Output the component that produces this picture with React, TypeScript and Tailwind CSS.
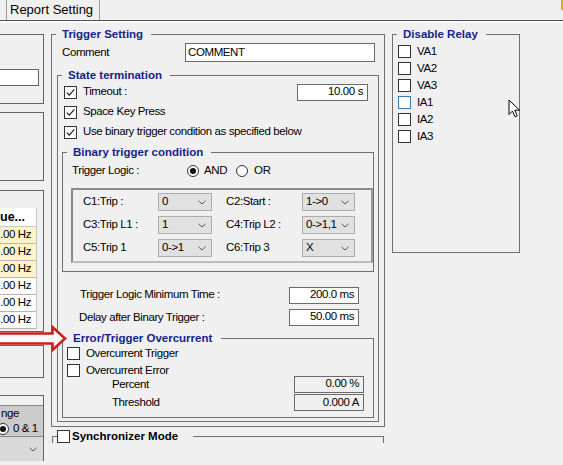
import { ReactNode } from 'react'

const titleCls = "font-bold text-[#14238a] tracking-normal leading-[14px]"

function Check({ checked = false, hover = false }: { checked?: boolean; hover?: boolean }) {
  return (
    <span
      className={`flex h-[13px] w-[13px] shrink-0 items-center justify-center border bg-white ${
        hover ? 'border-[#3d7bb5]' : 'border-[#333333]'
      }`}
    >
      {checked && (
        <svg viewBox="0 0 11 11" className="h-[11px] w-[11px]">
          <path d="M1.8 5.6 L4.3 8.1 L9.4 2.4" fill="none" stroke="#111" strokeWidth="1.1" />
        </svg>
      )}
    </span>
  )
}

function Radio({ checked = false }: { checked?: boolean }) {
  return (
    <span className="flex h-[12px] w-[12px] shrink-0 items-center justify-center rounded-full border border-[#333333] bg-white">
      {checked && <span className="h-[6px] w-[6px] rounded-full bg-[#111]" />}
    </span>
  )
}

function Chevron() {
  return (
    <svg viewBox="0 0 8 5" className="h-[5px] w-[8px]">
      <path d="M0.5 0.8 L4 4 L7.5 0.8" fill="none" stroke="#555" strokeWidth="1" />
    </svg>
  )
}

function Combo({ value }: { value: string }) {
  return (
    <div className="flex h-[18px] items-center justify-between border border-[#adadad] bg-[#e1e1e1] pl-[3px] pr-[5px]">
      <span>{value}</span>
      <Chevron />
    </div>
  )
}

function ValueBox({ value, disabled = false, width }: { value: string; disabled?: boolean; width: string }) {
  return (
    <div
      className={`flex h-[17px] items-center justify-end border border-[#6a6a6a] pr-[4px] ${width} ${
        disabled ? 'bg-[#f0f0f0]' : 'bg-white'
      }`}
    >
      {value}
    </div>
  )
}

function Group({ title, className = '', legendCls = '', children }: { title: ReactNode; className?: string; legendCls?: string; children?: ReactNode }) {
  return (
    <fieldset className={`border border-[#707070] ${className}`}>
      <legend className={`ml-[4px] pl-[6px] pr-[8px] ${titleCls} ${legendCls}`}>{title}</legend>
      {children}
    </fieldset>
  )
}

function Sidebar() {
  const rows = [true, true, true, false, false, false]
  return (
    <div className="flex w-[44px] shrink-0 flex-col">
      <div className="mt-[11px] h-[70px] border-y border-r border-[#646464]">
        <div className="mt-[34px] h-[17px] w-[39px] border-y border-r border-[#646464] bg-white" />
      </div>
      <div className="mt-[8px] h-[69px] border-y border-r border-[#646464]" />
      <div className="mt-[9px] h-[142px] border-y border-r border-[#646464]">
        <div className="mt-[17px] w-[37px] border-r border-[#c8c8c8]">
          <div className="flex h-[19px] items-center border-b border-[#c8c8c8] bg-white text-[12.5px] font-bold tracking-normal">
            ue...
          </div>
          {rows.map((y, i) => (
            <div
              key={i}
              className={`flex h-[17px] items-center justify-end border-b border-[#b4b4b4] pr-[5px] ${
                y ? 'bg-[#fff3c9]' : 'bg-white'
              }`}
            >
              .00 Hz
            </div>
          ))}
        </div>
      </div>
      <div className="mt-[13px] h-[33px] border-y border-r border-[#646464]" />
      <div className="mt-[17px] flex-1 border-t border-r border-[#646464]">
        <div className="h-[9px]" />
        <div className="flex h-[32px] flex-col justify-center border-y border-[#8a8a8a] bg-[#cbcbcb]">
          <div className="flex h-[15px] items-center pl-px">nge</div>
          <div className="-ml-[3px] flex h-[15px] items-center gap-[4px]">
            <Radio checked />
            <span className="whitespace-nowrap">0 &amp; 1</span>
          </div>
        </div>
        <div className="flex h-[24px] items-center justify-end bg-[#d9d9d9] pr-[6px]">
          <Chevron />
        </div>
      </div>
    </div>
  )
}

function TriggerSetting() {
  const conds = [
    ['C1:Trip :', '0', 'C2:Start :', '1->0'],
    ['C3:Trip L1 :', '1', 'C4:Trip L2 :', '0->1,1'],
    ['C5:Trip 1', '0->1', 'C6:Trip 3', 'X'],
  ]
  return (
    <div className="ml-[7px] flex w-[334px] shrink-0 flex-col">
      <Group title="Trigger Setting" className="mt-[4px] pb-[4px]">
        <div className="mt-[2px] flex h-[19px] items-center">
          <span className="ml-[10px] w-[123px]">Comment</span>
          <div className="flex h-[19px] w-[190px] items-center border border-[#6a6a6a] bg-white pl-[2px]">COMMENT</div>
        </div>

        <Group title="State termination" className="mx-[5px] mt-[6px] pb-[3px]">
          <div className="flex h-[20px] items-center gap-[6px] pl-[6px]">
            <Check checked />
            <span>Timeout :</span>
            <div className="ml-auto mr-[10px]">
              <ValueBox value="10.00 s" width="w-[71px]" />
            </div>
          </div>
          <div className="flex h-[20px] items-center gap-[6px] pl-[6px]">
            <Check checked />
            <span>Space Key Press</span>
          </div>
          <div className="flex h-[20px] items-center gap-[6px] pl-[6px]">
            <Check checked />
            <span>Use binary trigger condition as specified below</span>
          </div>

          <Group title="Binary trigger condition" className="mx-[4px] mt-[3px] pb-[8px]" legendCls="pl-[5px] pr-[7px]">
            <div className="flex h-[24px] items-center pl-[9px]">
              <span className="w-[115px]">Trigger Logic :</span>
              <Radio checked />
              <span className="ml-[5px]">AND</span>
              <span className="ml-[9px]">
                <Radio />
              </span>
              <span className="ml-[6px]">OR</span>
            </div>
            <div className="ml-[8px] mt-[5px] h-[75px] border-2 border-t-[#8a8a8a] border-l-[#8a8a8a] border-r-[#9a9a9a] border-b-[#bdbdbd] pt-[3px]">
              <div className="grid grid-cols-[75px_54px_90px_53px] gap-y-[5px] pl-[10px]">
                {conds.map(([l1, v1, l2, v2]) => (
                  <div key={l1} className="contents">
                    <span className="flex h-[18px] items-center">{l1}</span>
                    <Combo value={v1} />
                    <span className="flex h-[18px] items-center pl-[14px]">{l2}</span>
                    <Combo value={v2} />
                  </div>
                ))}
              </div>
            </div>
          </Group>

          <div className="mt-[12px] flex h-[22px] items-center pl-[22px]">
            <span>Trigger Logic Minimum Time :</span>
            <div className="ml-auto mr-[19px]">
              <ValueBox value="200.0 ms" width="w-[70px]" />
            </div>
          </div>
          <div className="flex h-[22px] items-center pl-[21px]">
            <span className="translate-y-[1px]">Delay after Binary Trigger :</span>
            <div className="ml-auto mr-[19px]">
              <ValueBox value="50.00 ms" width="w-[70px]" />
            </div>
          </div>

          <Group title="Error/Trigger Overcurrent" className="mx-[4px] mt-[3px] pb-[5px]" legendCls="pl-[5px] pr-[9px]">
            <div className="flex h-[17px] items-center gap-[6px] pl-[4px]">
              <Check />
              <span>Overcurrent Trigger</span>
            </div>
            <div className="flex h-[17px] items-center gap-[6px] pl-[4px]">
              <Check />
              <span>Overcurrent Error</span>
            </div>
            <div className="-mt-[4px] flex h-[18px] items-center pl-[49px]">
              <span className="translate-y-[1px]">Percent</span>
              <div className="ml-auto mr-[9px]">
                <ValueBox value="0.00 %" width="w-[70px]" disabled />
              </div>
            </div>
            <div className="flex h-[19px] items-center pl-[49px]">
              <span>Threshold</span>
              <div className="ml-auto mr-[9px]">
                <ValueBox value="0.000 A" width="w-[70px]" disabled />
              </div>
            </div>
          </Group>
        </Group>
      </Group>

      <fieldset className="ml-[1px] mt-[2px] w-[332px] border border-b-0 border-[#707070]">
        <legend className="ml-[4px] flex items-center gap-[2px] pr-[15px] font-bold leading-[14px] tracking-normal">
          <Check />
          <span>Synchronizer Mode</span>
        </legend>
      </fieldset>
    </div>
  )
}

function DisableRelay() {
  const items = ['VA1', 'VA2', 'VA3', 'IA1', 'IA2', 'IA3']
  return (
    <Group title="Disable Relay" className="ml-[7px] mt-[4px] h-[226px] w-[128px] shrink-0">
      <div className="pt-[2px]">
        {items.map((it) => (
          <div key={it} className="flex h-[17px] items-center gap-[6px] pl-[5px]">
            <Check hover={it === 'IA1'} />
            <span>{it}</span>
          </div>
        ))}
      </div>
    </Group>
  )
}

export default function App() {
  return (
    <div className="relative h-[465px] w-[563px] overflow-hidden bg-[#f0f0f0] font-['Liberation_Sans',Arial,sans-serif] text-[11.5px] tracking-[-0.4px] text-black">
      <div className="flex h-[21px] border-b border-[#555555]">
        <div className="w-[7px] border-r border-[#9a9a9a]" />
        <div className="flex items-center border-r border-[#9a9a9a] pl-[3px] pr-[6px] text-[13px] tracking-normal">
          Report Setting
        </div>
        <div className="flex-1" />
        <div className="h-[10px] w-[2px] bg-[#e6b400]" />
      </div>
      <div className="h-[2px] bg-[#fbfbfb]" />

      <div className="flex">
        <Sidebar />
        <TriggerSetting />
        <DisableRelay />
      </div>

      <svg className="absolute left-0 top-[325px]" width="67" height="27" viewBox="0 0 67 27">
        <polygon
          points="-2,8.5 52.5,8.5 52.5,2 65,13.5 52.5,25 52.5,18.5 -2,18.5"
          fill="#fafafa"
          stroke="#d01c1c"
          strokeWidth="2.5"
          strokeLinejoin="miter"
        />
      </svg>

      <svg className="absolute left-[508px] top-[99px]" width="13" height="20" viewBox="0 0 13 20">
        <path d="M1 1 L1 15.5 L4.5 12 L7 17.8 L9.2 16.8 L6.8 11.2 L11.5 11.2 Z" fill="#fff" stroke="#000" strokeWidth="1" strokeLinejoin="round" />
      </svg>
    </div>
  )
}
